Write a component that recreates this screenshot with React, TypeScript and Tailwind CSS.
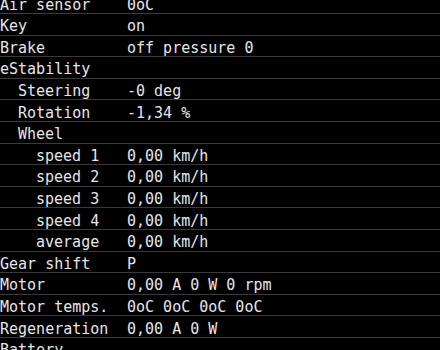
const rows: { label: string; value: string; indent?: number }[] = [
  { label: "Air sensor", value: "0oC" },
  { label: "Key", value: "on" },
  { label: "Brake", value: "off pressure 0" },
  { label: "eStability", value: "" },
  { label: "Steering", value: "-0 deg", indent: 1 },
  { label: "Rotation", value: "-1,34 %", indent: 1 },
  { label: "Wheel", value: "", indent: 1 },
  { label: "speed 1", value: "0,00 km/h", indent: 2 },
  { label: "speed 2", value: "0,00 km/h", indent: 2 },
  { label: "speed 3", value: "0,00 km/h", indent: 2 },
  { label: "speed 4", value: "0,00 km/h", indent: 2 },
  { label: "average", value: "0,00 km/h", indent: 2 },
  { label: "Gear shift", value: "P" },
  { label: "Motor", value: "0,00 A 0 W 0 rpm" },
  { label: "Motor temps.", value: "0oC 0oC 0oC 0oC" },
  { label: "Regeneration", value: "0,00 A 0 W" },
  { label: "Battery", value: "" },
];

const App = () => {
  return (
    <div className="h-[350px] w-[440px] overflow-hidden bg-black font-['DejaVu_Sans_Mono',monospace] text-[15px] text-[#e6e6e6]">
      <div className="-mt-[7.6px]">
        {rows.map((row, index) => (
          <div
            key={index}
            className="flex h-[21.6px] items-center border-b border-[#3a3a3a] pt-[5px] leading-none"
          >
            <div
              className={
                "w-[127px] shrink-0 whitespace-pre " +
                (row.indent === 2 ? "pl-[36px]" : row.indent === 1 ? "pl-[18px]" : "")
              }
            >
              {row.label}
            </div>
            <div className="whitespace-pre">{row.value}</div>
          </div>
        ))}
      </div>
    </div>
  );
};

export default App;
